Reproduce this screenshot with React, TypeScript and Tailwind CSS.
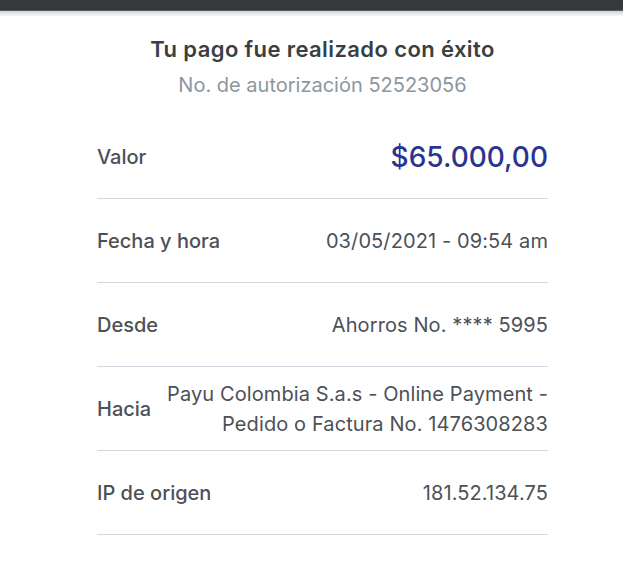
export default function App() {
  const rows = [
    { label: "Fecha y hora", value: ["03/05/2021 - 09:54 am"] },
    { label: "Desde", value: ["Ahorros No. **** 5995"] },
    { label: "Hacia", value: ["Payu Colombia S.a.s - Online Payment -", "Pedido o Factura No. 1476308283"] },
    { label: "IP de origen", value: ["181.52.134.75"] },
  ]

  return (
    <div className="h-[561px] w-full overflow-hidden bg-white" style={{ fontFamily: "Inter, 'Noto Sans', sans-serif" }}>
      {/* top bar */}
      <div className="h-[11px] bg-[#35393c] border-b border-[#55595c]" />
      <div className="h-[6px] bg-gradient-to-b from-[#d4d4d4] to-white" />

      <div className="ml-[97px] w-[451px]">
        <div className="pt-[19px] text-center">
          <h1 className="text-[22px] leading-[26px] font-semibold tracking-[0.4px] text-[#3a3f44]">Tu pago fue realizado con éxito</h1>
          <p className="mt-[11px] text-[20px] leading-[24px] text-[#8d96a0]">No. de autorización 52523056</p>
        </div>

        <div className="mt-[18px]">
          <div className="flex h-[84px] items-center justify-between border-b border-[#cfd8e1]">
            <span className="text-[20px] font-medium text-[#4c5157]">Valor</span>
            <span className="text-[28px] font-medium text-[#2b3490]">$65.000,00</span>
          </div>
          {rows.map((r) => (
            <div key={r.label} className="flex h-[84px] items-center justify-between border-b border-[#cfd8e1]">
              <span className="text-[20px] font-medium text-[#4c5157]">{r.label}</span>
              <div className="text-right text-[20px] leading-[30px] tracking-[0.1px] text-[#4c5157]">
                {r.value.map((v) => (
                  <div key={v}>{v}</div>
                ))}
              </div>
            </div>
          ))}
        </div>
      </div>
    </div>
  )
}
